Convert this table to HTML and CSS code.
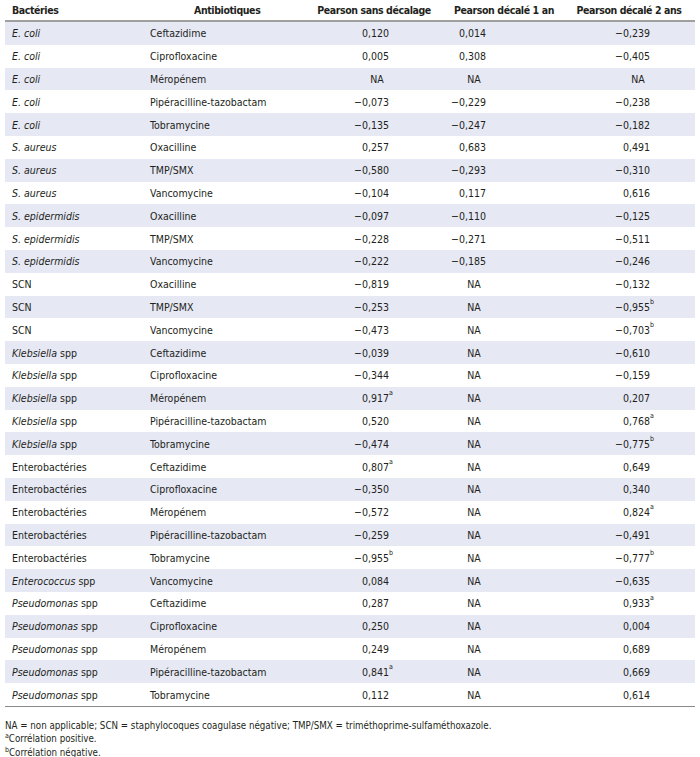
FILE: index.html
```html
<!DOCTYPE html>
<html lang="fr">
<head>
<meta charset="utf-8">
<link rel="stylesheet" href="styles.css">
</head>
<body>
<div class="page">
  <div class="table">
    <div class="row head">
      <div class="c c1">Bactéries</div>
      <div class="c c2">Antibiotiques</div>
      <div class="c h3">Pearson sans décalage</div>
      <div class="c h4">Pearson décalé 1 an</div>
      <div class="c h5">Pearson décalé 2 ans</div>
    </div>

    <div class="row"><div class="c c1"><i>E. coli</i></div><div class="c c2">Ceftazidime</div><div class="c n3"><span class="v">0,120</span></div><div class="c n4"><span class="v">0,014</span></div><div class="c n5"><span class="v">−0,239</span></div></div>
    <div class="row"><div class="c c1"><i>E. coli</i></div><div class="c c2">Ciprofloxacine</div><div class="c n3"><span class="v">0,005</span></div><div class="c n4"><span class="v">0,308</span></div><div class="c n5"><span class="v">−0,405</span></div></div>
    <div class="row"><div class="c c1"><i>E. coli</i></div><div class="c c2">Méropénem</div><div class="c n3"><span class="na">NA</span></div><div class="c n4"><span class="na">NA</span></div><div class="c n5"><span class="na">NA</span></div></div>
    <div class="row"><div class="c c1"><i>E. coli</i></div><div class="c c2">Pipéracilline-tazobactam</div><div class="c n3"><span class="v">−0,073</span></div><div class="c n4"><span class="v">−0,229</span></div><div class="c n5"><span class="v">−0,238</span></div></div>
    <div class="row"><div class="c c1"><i>E. coli</i></div><div class="c c2">Tobramycine</div><div class="c n3"><span class="v">−0,135</span></div><div class="c n4"><span class="v">−0,247</span></div><div class="c n5"><span class="v">−0,182</span></div></div>
    <div class="row"><div class="c c1"><i>S. aureus</i></div><div class="c c2">Oxacilline</div><div class="c n3"><span class="v">0,257</span></div><div class="c n4"><span class="v">0,683</span></div><div class="c n5"><span class="v">0,491</span></div></div>
    <div class="row"><div class="c c1"><i>S. aureus</i></div><div class="c c2">TMP/SMX</div><div class="c n3"><span class="v">−0,580</span></div><div class="c n4"><span class="v">−0,293</span></div><div class="c n5"><span class="v">−0,310</span></div></div>
    <div class="row"><div class="c c1"><i>S. aureus</i></div><div class="c c2">Vancomycine</div><div class="c n3"><span class="v">−0,104</span></div><div class="c n4"><span class="v">0,117</span></div><div class="c n5"><span class="v">0,616</span></div></div>
    <div class="row"><div class="c c1"><i>S. epidermidis</i></div><div class="c c2">Oxacilline</div><div class="c n3"><span class="v">−0,097</span></div><div class="c n4"><span class="v">−0,110</span></div><div class="c n5"><span class="v">−0,125</span></div></div>
    <div class="row"><div class="c c1"><i>S. epidermidis</i></div><div class="c c2">TMP/SMX</div><div class="c n3"><span class="v">−0,228</span></div><div class="c n4"><span class="v">−0,271</span></div><div class="c n5"><span class="v">−0,511</span></div></div>
    <div class="row"><div class="c c1"><i>S. epidermidis</i></div><div class="c c2">Vancomycine</div><div class="c n3"><span class="v">−0,222</span></div><div class="c n4"><span class="v">−0,185</span></div><div class="c n5"><span class="v">−0,246</span></div></div>
    <div class="row"><div class="c c1">SCN</div><div class="c c2">Oxacilline</div><div class="c n3"><span class="v">−0,819</span></div><div class="c n4"><span class="na">NA</span></div><div class="c n5"><span class="v">−0,132</span></div></div>
    <div class="row"><div class="c c1">SCN</div><div class="c c2">TMP/SMX</div><div class="c n3"><span class="v">−0,253</span></div><div class="c n4"><span class="na">NA</span></div><div class="c n5"><span class="v">−0,955<sup>b</sup></span></div></div>
    <div class="row"><div class="c c1">SCN</div><div class="c c2">Vancomycine</div><div class="c n3"><span class="v">−0,473</span></div><div class="c n4"><span class="na">NA</span></div><div class="c n5"><span class="v">−0,703<sup>b</sup></span></div></div>
    <div class="row"><div class="c c1"><i>Klebsiella</i> spp</div><div class="c c2">Ceftazidime</div><div class="c n3"><span class="v">−0,039</span></div><div class="c n4"><span class="na">NA</span></div><div class="c n5"><span class="v">−0,610</span></div></div>
    <div class="row"><div class="c c1"><i>Klebsiella</i> spp</div><div class="c c2">Ciprofloxacine</div><div class="c n3"><span class="v">−0,344</span></div><div class="c n4"><span class="na">NA</span></div><div class="c n5"><span class="v">−0,159</span></div></div>
    <div class="row"><div class="c c1"><i>Klebsiella</i> spp</div><div class="c c2">Méropénem</div><div class="c n3"><span class="v">0,917<sup>a</sup></span></div><div class="c n4"><span class="na">NA</span></div><div class="c n5"><span class="v">0,207</span></div></div>
    <div class="row"><div class="c c1"><i>Klebsiella</i> spp</div><div class="c c2">Pipéracilline-tazobactam</div><div class="c n3"><span class="v">0,520</span></div><div class="c n4"><span class="na">NA</span></div><div class="c n5"><span class="v">0,768<sup>a</sup></span></div></div>
    <div class="row"><div class="c c1"><i>Klebsiella</i> spp</div><div class="c c2">Tobramycine</div><div class="c n3"><span class="v">−0,474</span></div><div class="c n4"><span class="na">NA</span></div><div class="c n5"><span class="v">−0,775<sup>b</sup></span></div></div>
    <div class="row"><div class="c c1">Enterobactéries</div><div class="c c2">Ceftazidime</div><div class="c n3"><span class="v">0,807<sup>a</sup></span></div><div class="c n4"><span class="na">NA</span></div><div class="c n5"><span class="v">0,649</span></div></div>
    <div class="row"><div class="c c1">Enterobactéries</div><div class="c c2">Ciprofloxacine</div><div class="c n3"><span class="v">−0,350</span></div><div class="c n4"><span class="na">NA</span></div><div class="c n5"><span class="v">0,340</span></div></div>
    <div class="row"><div class="c c1">Enterobactéries</div><div class="c c2">Méropénem</div><div class="c n3"><span class="v">−0,572</span></div><div class="c n4"><span class="na">NA</span></div><div class="c n5"><span class="v">0,824<sup>a</sup></span></div></div>
    <div class="row"><div class="c c1">Enterobactéries</div><div class="c c2">Pipéracilline-tazobactam</div><div class="c n3"><span class="v">−0,259</span></div><div class="c n4"><span class="na">NA</span></div><div class="c n5"><span class="v">−0,491</span></div></div>
    <div class="row"><div class="c c1">Enterobactéries</div><div class="c c2">Tobramycine</div><div class="c n3"><span class="v">−0,955<sup>b</sup></span></div><div class="c n4"><span class="na">NA</span></div><div class="c n5"><span class="v">−0,777<sup>b</sup></span></div></div>
    <div class="row"><div class="c c1"><i>Enterococcus</i> spp</div><div class="c c2">Vancomycine</div><div class="c n3"><span class="v">0,084</span></div><div class="c n4"><span class="na">NA</span></div><div class="c n5"><span class="v">−0,635</span></div></div>
    <div class="row"><div class="c c1"><i>Pseudomonas</i> spp</div><div class="c c2">Ceftazidime</div><div class="c n3"><span class="v">0,287</span></div><div class="c n4"><span class="na">NA</span></div><div class="c n5"><span class="v">0,933<sup>a</sup></span></div></div>
    <div class="row"><div class="c c1"><i>Pseudomonas</i> spp</div><div class="c c2">Ciprofloxacine</div><div class="c n3"><span class="v">0,250</span></div><div class="c n4"><span class="na">NA</span></div><div class="c n5"><span class="v">0,004</span></div></div>
    <div class="row"><div class="c c1"><i>Pseudomonas</i> spp</div><div class="c c2">Méropénem</div><div class="c n3"><span class="v">0,249</span></div><div class="c n4"><span class="na">NA</span></div><div class="c n5"><span class="v">0,689</span></div></div>
    <div class="row"><div class="c c1"><i>Pseudomonas</i> spp</div><div class="c c2">Pipéracilline-tazobactam</div><div class="c n3"><span class="v">0,841<sup>a</sup></span></div><div class="c n4"><span class="na">NA</span></div><div class="c n5"><span class="v">0,669</span></div></div>
    <div class="row"><div class="c c1"><i>Pseudomonas</i> spp</div><div class="c c2">Tobramycine</div><div class="c n3"><span class="v">0,112</span></div><div class="c n4"><span class="na">NA</span></div><div class="c n5"><span class="v">0,614</span></div></div>
  </div>
  <div class="notes">
    <p>NA = non applicable; SCN = staphylocoques coagulase négative; TMP/SMX = triméthoprime-sulfaméthoxazole.</p>
    <p><sup>a</sup>Corrélation positive.</p>
    <p><sup>b</sup>Corrélation négative.</p>
  </div>
</div>
</body>
</html>
```

FILE: styles.css
```css
html, body {
  margin: 0;
  padding: 0;
  background: #ffffff;
}
body {
  font-family: "DejaVu Sans Condensed", "DejaVu Sans", sans-serif;
  font-stretch: condensed;
  color: #231f20;
  font-size: 10.5px;
}
.page {
  padding: 0 5px;
}
.table {
  border-bottom: 1.5px solid #8a8a8a;
}
.row {
  display: grid;
  grid-template-columns: 140px 155px 148px 112px 135px;
  height: 22.8px;
  align-items: center;
}
.row:nth-child(even) {
  background: #e6e8f4;
}
.row.head {
  height: 20px;
  font-weight: bold;
  letter-spacing: -0.4px;
  border-bottom: 2px solid #a0a0a0;
}
.c {
  white-space: nowrap;
}
.c1 {
  padding-left: 7px;
}
.c2 {
  padding-left: 5px;
}
.head .c2 {
  padding-left: 49px;
}
.h3, .h4, .h5 {
  text-align: center;
}
.h5 {
  padding-left: 3px;
}
.n3 { padding-left: 65px; }
.n4 { padding-left: 14px; }
.n5 { padding-left: 66px; }
.v {
  display: inline-flex;
  justify-content: flex-end;
  width: 24px;
  position: relative;
}
.v sup {
  position: absolute;
  left: 100%;
  top: -3px;
  font-size: 7px;
}
.na {
  display: inline-block;
  width: 24px;
  text-align: center;
}
.notes {
  padding-top: 12px;
  font-size: 9.7px;
}
.notes p {
  margin: 0;
  line-height: 13.5px;
}
.notes sup {
  font-size: 7px;
  vertical-align: 4px;
  line-height: 0;
}
```
